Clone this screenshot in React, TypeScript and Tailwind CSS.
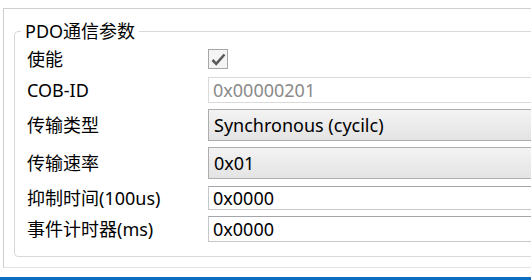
const font = {
  fontFamily: '"Noto Sans", "Noto Sans CJK SC", sans-serif',
};

const labelClass = "w-[181px] shrink-0 text-[18px] leading-[20px] text-black";
const textBox =
  "h-full flex-1 flex items-center pl-[4px] bg-white border border-[#c4c7cc] border-t-[#a3a6ab] text-[18px] leading-[20px] text-black";
const comboBox =
  "h-full flex-1 flex items-center pl-[5px] bg-gradient-to-b from-[#f3f3f3] to-[#e4e4e4] border border-[#adadad] text-[18px] leading-[20px] text-black";

function Row({
  label,
  h,
  mt,
  children,
}: {
  label: string;
  h: string;
  mt: string;
  children: React.ReactNode;
}) {
  return (
    <div className={`flex items-center ${h} ${mt}`}>
      <div className={labelClass}>{label}</div>
      {children}
    </div>
  );
}

export default function App() {
  return (
    <div className="w-[531px] h-[280px] overflow-hidden bg-white relative" style={font}>
      <div className="pt-[8px] pl-[3px]">
        <div className="w-[700px] h-[260px] border-l border-t border-b border-l-[#cfcfcf] border-t-[#cfcfcf] border-b-[#e2e2e2]">
          <fieldset className="ml-[10px] mt-[12px] w-[680px] border border-[#d5dadf] rounded-[4px] pl-[12px] pb-[14px]">
            <legend className="-ml-[6px] px-[4px] text-[18px] leading-[20px] text-black">
              PDO通信参数
            </legend>
            <div className="pt-[8px] flex flex-col">
              <Row label="使能" h="h-[20px]" mt="mt-0">
                <div className="w-[20px] h-[20px] border border-[#a6a6a6] bg-[#f4f4f4] flex items-center justify-center">
                  <svg width="15" height="13" viewBox="0 0 15 13">
                    <path
                      d="M1.5 7 L5.2 10.8 L13.5 1.5"
                      fill="none"
                      stroke="#5a5a5a"
                      strokeWidth="2.6"
                    />
                  </svg>
                </div>
              </Row>
              <Row label="COB-ID" h="h-[26px]" mt="mt-[8px]">
                <div className="h-full flex-1 flex items-center pl-[4px] bg-white border border-[#dadada] text-[18px] leading-[20px] text-[#8a8a8a]">
                  0x00000201
                </div>
              </Row>
              <Row label="传输类型" h="h-[32px]" mt="mt-[6px]">
                <div className={comboBox}>Synchronous (cycilc)</div>
              </Row>
              <Row label="传输速率" h="h-[32px]" mt="mt-[6px]">
                <div className={comboBox}>0x01</div>
              </Row>
              <Row label="抑制时间(100us)" h="h-[24px]" mt="mt-[7px]">
                <div className={textBox}>0x0000</div>
              </Row>
              <Row label="事件计时器(ms)" h="h-[26px]" mt="mt-[6px]">
                <div className={textBox}>0x0000</div>
              </Row>
            </div>
          </fieldset>
        </div>
      </div>
      <div className="absolute left-0 right-0 bottom-0 h-[3px] bg-[#0a6fc2]" />
    </div>
  );
}
